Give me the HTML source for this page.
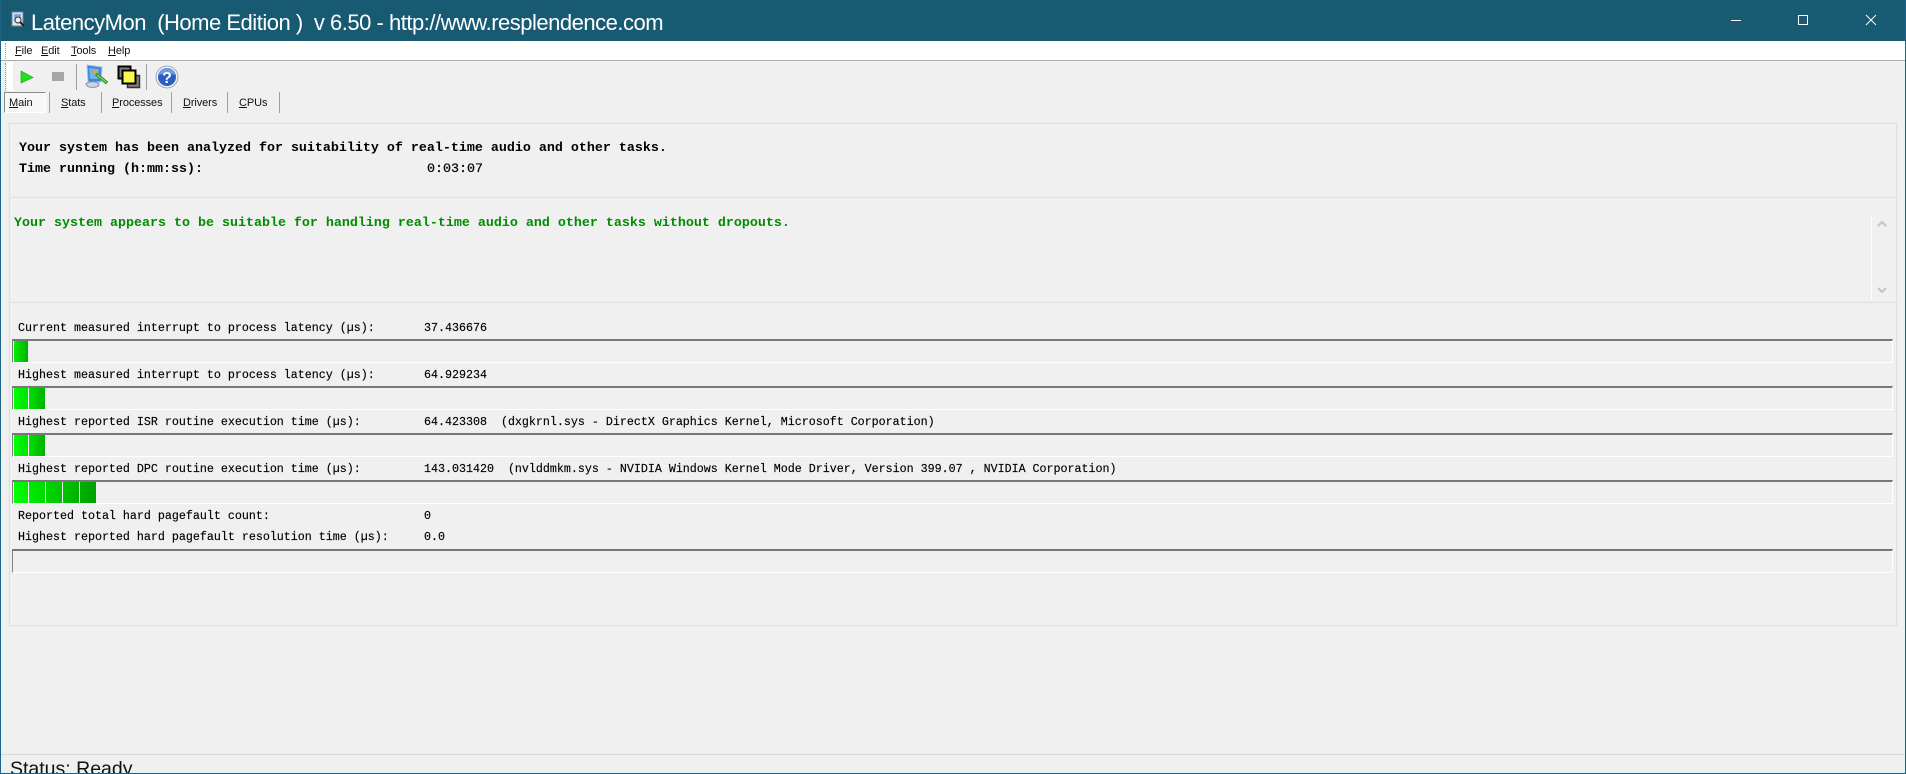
<!DOCTYPE html>
<html><head><meta charset="utf-8"><title>LatencyMon</title>
<style>
html,body{margin:0;padding:0}
body{width:1906px;height:774px;position:relative;overflow:hidden;background:#f0f0f0;font-family:"Liberation Sans",sans-serif;color:#000}
div,span.a,svg{position:absolute}
.t{white-space:pre;line-height:14px}
.m{font:11.67px/14px "Liberation Mono",monospace;white-space:pre;-webkit-text-stroke:.15px #000}
.b{font:bold 13.33px/16px "Liberation Mono",monospace;white-space:pre}
.menu{font-size:11px;letter-spacing:-.1px;line-height:14px;white-space:pre;color:#111}
.panel{left:9px;width:1886px;border:1px solid #e0e0e0;box-shadow:0 0 0 1px #ececec}
.bar{left:12px;width:1879px;height:21px;border-top:2px solid #787878;border-left:1px solid #808080;border-bottom:1px solid #fff;border-right:1px solid #fff}
.s{top:0;height:21px}
.sep{width:1px;background:#a0a0a0}
</style></head><body>
<div style="left:0;top:0;width:1906px;height:41px;background:#175a72"></div>
<svg style="left:10px;top:11px" width="17" height="18" viewBox="0 0 17 18"><rect x="2" y="1" width="11" height="14" fill="#dfe6ee" stroke="#6f8090"/><rect x="4" y="3" width="7" height="7" fill="#7fa7d8"/><circle cx="8" cy="9" r="3" fill="#eee" stroke="#333"/><path d="M10 11l4 4" stroke="#222" stroke-width="2"/></svg>
<div class="t" style="left:31px;top:9px;font-size:22px;letter-spacing:-.49px;line-height:28px;color:#fff">LatencyMon  (Home Edition )  v 6.50 - http://www.resplendence.com</div>
<svg style="left:1725px;top:10px" width="160" height="20" viewBox="0 0 160 20" fill="none" stroke="#fff"><path d="M6 10.500h10"/><rect x="73.500" y="5.500" width="9" height="9"/><path d="M141 5l10 10M151 5l-10 10"/></svg>
<div style="left:1px;top:41px;width:1904px;height:19px;background:#fff"></div>
<div style="left:0;top:60px;width:1906px;height:1px;background:#acacac"></div>
<div style="left:0;top:0;width:1px;height:774px;background:#1d6485"></div>
<div style="left:1905px;top:0;width:1px;height:774px;background:#1d6485"></div>
<div style="left:0;top:773px;width:1906px;height:1px;background:#1d6485"></div>
<div class="menu" style="left:15px;top:44px"><u>F</u>ile</div>
<div class="menu" style="left:41px;top:44px"><u>E</u>dit</div>
<div class="menu" style="left:71px;top:44px"><u>T</u>ools</div>
<div class="menu" style="left:108px;top:44px"><u>H</u>elp</div>
<div style="left:5px;top:43px;width:0;height:16px;border-left:1px dotted #999"></div>
<div style="left:5px;top:63px;width:0;height:28px;border-left:1px dotted #999"></div>
<div style="left:7px;top:62px;width:6px;height:29px;background:#fff"></div>
<svg style="left:20px;top:69px" width="14" height="16" viewBox="0 0 14 16"><path d="M1 2L13 8.500 1 14z" fill="#1fe21f" stroke="#139c13" stroke-width=".6"/></svg>
<div style="left:52px;top:72px;width:12px;height:9px;background:#a6a6a6"></div>
<div class="sep" style="left:76px;top:64px;height:26px"></div>
<svg style="left:83px;top:63px" width="27" height="27" viewBox="0 0 27 27"><path d="M4 2l15 2-1 15-13 0z" fill="#3f86d8" stroke="#a8c4e4"/><path d="M6 5l10 1-1 10-8 0z" fill="#6db4f2"/><path d="M3 21c3-3 10-3 13 0 1 4-12 5-13 0z" fill="#cdd2e2" stroke="#8a8fa5"/><path d="M13 11l11 9" stroke="#3a9a2e" stroke-width="3.500"/><path d="M14 12l9 7" stroke="#8fdc6a" stroke-width="1"/><path d="M9 7l6 1-3 4z" fill="#f0a030"/></svg>
<svg style="left:117px;top:65px" width="24" height="24" viewBox="0 0 24 24"><rect x="1.500" y="1.500" width="12" height="12" fill="#808080" stroke="#000" stroke-width="2"/><rect x="10.500" y="10.500" width="12" height="12" fill="#808080" stroke="#333" stroke-width="1.500"/><rect x="5.500" y="5.500" width="13" height="13" fill="#f8f850" stroke="#000" stroke-width="2"/></svg>
<div class="sep" style="left:146px;top:64px;height:26px"></div>
<svg style="left:155px;top:65px" width="24" height="24" viewBox="0 0 24 24"><circle cx="12" cy="12" r="11" fill="#eef2f7" stroke="#8a96a8" stroke-width=".8"/><circle cx="12" cy="12" r="9" fill="#2a5fc0"/><path d="M4 10a8 7 0 0 1 16 0c-5-2-11-2-16 0z" fill="#6f9be0"/><text x="12" y="18" font-family="Liberation Sans" font-weight="bold" font-size="16" text-anchor="middle" fill="#fff">?</text></svg>
<div style="left:4px;top:92px;width:40px;height:19px;border:1px solid #8a8a8a;border-right-color:#fff;border-bottom-color:#fff;background:#f7f7f7"></div>
<div class="menu" style="left:9px;top:96px"><u>M</u>ain</div>
<div class="sep" style="left:49px;top:92px;height:21px"></div>
<div class="menu" style="left:61px;top:96px"><u>S</u>tats</div>
<div class="sep" style="left:101px;top:92px;height:21px"></div>
<div class="menu" style="left:112px;top:96px"><u>P</u>rocesses</div>
<div class="sep" style="left:171px;top:92px;height:21px"></div>
<div class="menu" style="left:183px;top:96px"><u>D</u>rivers</div>
<div class="sep" style="left:227px;top:92px;height:21px"></div>
<div class="menu" style="left:239px;top:96px"><u>C</u>PUs</div>
<div class="sep" style="left:279px;top:92px;height:21px"></div>

<div class="panel" style="top:123px;height:72px"></div>
<div class="panel" style="top:197px;height:103px"></div>
<div class="panel" style="top:302px;height:322px"></div>

<div class="b" style="left:19px;top:141px">Your system has been analyzed for suitability of real-time audio and other tasks.</div>
<div class="b" style="left:19px;top:162px">Time running (h:mm:ss):</div>
<div class="b" style="left:427px;top:162px;font-weight:normal;-webkit-text-stroke:.2px #000">0:03:07</div>
<div class="b" style="left:14px;top:216px;color:#008c00">Your system appears to be suitable for handling real-time audio and other tasks without dropouts.</div>
<div style="left:1871px;top:215px;width:1px;height:85px;background:#fff"></div>
<svg style="left:1876px;top:217px" width="12" height="84" viewBox="0 0 12 84" fill="none" stroke="#c4c4c4" stroke-width="2"><path d="M2 9l4-4 4 4M2 71l4 4 4-4"/></svg>

<div class="m" style="left:18px;top:321px">Current measured interrupt to process latency (µs):</div>
<div class="m" style="left:424px;top:321px">37.436676</div>
<div class="bar" style="top:339px"><div class="s" style="left:1px;width:14px;background:linear-gradient(90deg,#00f000,#00b000)"></div></div>

<div class="m" style="left:18px;top:368px">Highest measured interrupt to process latency (µs):</div>
<div class="m" style="left:424px;top:368px">64.929234</div>
<div class="bar" style="top:386px"><div class="s" style="left:1px;width:14px;background:linear-gradient(90deg,#00ff00,#00e000)"></div><div class="s" style="left:16px;width:16px;background:linear-gradient(90deg,#00e000,#00b000)"></div></div>

<div class="m" style="left:18px;top:415px">Highest reported ISR routine execution time (µs):</div>
<div class="m" style="left:424px;top:415px">64.423308  (dxgkrnl.sys - DirectX Graphics Kernel, Microsoft Corporation)</div>
<div class="bar" style="top:433px"><div class="s" style="left:1px;width:14px;background:linear-gradient(90deg,#00ff00,#00e000)"></div><div class="s" style="left:16px;width:16px;background:linear-gradient(90deg,#00e000,#00b000)"></div></div>

<div class="m" style="left:18px;top:462px">Highest reported DPC routine execution time (µs):</div>
<div class="m" style="left:424px;top:462px">143.031420  (nvlddmkm.sys - NVIDIA Windows Kernel Mode Driver, Version 399.07 , NVIDIA Corporation)</div>
<div class="bar" style="top:480px"><div class="s" style="left:1px;width:14px;background:linear-gradient(90deg,#00ff00,#00ec00)"></div><div class="s" style="left:16px;width:16px;background:linear-gradient(90deg,#00ec00,#00d800)"></div><div class="s" style="left:33px;width:16px;background:linear-gradient(90deg,#00d800,#00c400)"></div><div class="s" style="left:50px;width:16px;background:linear-gradient(90deg,#00c400,#00b000)"></div><div class="s" style="left:67px;width:16px;background:linear-gradient(90deg,#00b000,#00a000)"></div></div>

<div class="m" style="left:18px;top:509px">Reported total hard pagefault count:</div>
<div class="m" style="left:424px;top:509px">0</div>
<div class="m" style="left:18px;top:530px">Highest reported hard pagefault resolution time (µs):</div>
<div class="m" style="left:424px;top:530px">0.0</div>
<div class="bar" style="top:549px"></div>

<div style="left:1px;top:754px;width:1904px;height:1px;background:#d8d8d8"></div>
<div style="left:1px;top:755px;width:1904px;height:18px;overflow:hidden"><div class="t" style="left:9px;top:1px;font-size:19.500px;line-height:26px;color:#111">Status: Ready</div></div>
</body></html>
